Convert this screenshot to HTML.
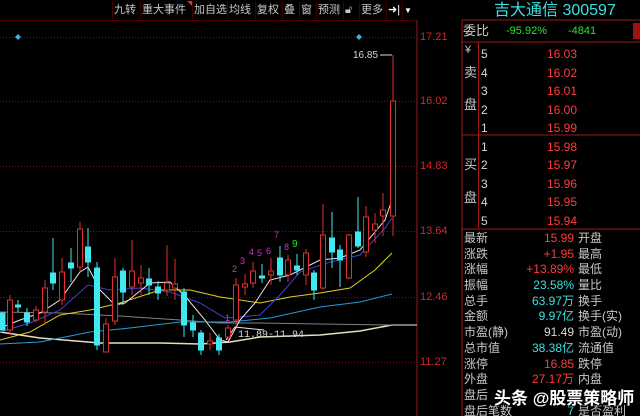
<!DOCTYPE html>
<html style="width:640px;height:416px;overflow:hidden"><head><meta charset="utf-8"><style>
*{margin:0;padding:0;box-sizing:border-box}
body{width:640px;height:416px;background:#000;overflow:hidden;position:relative;font-family:"Liberation Sans","Noto Sans CJK SC",sans-serif;}
.t{position:absolute;white-space:nowrap;line-height:1}
.tb{position:absolute;top:2px;height:17px;font-size:11px;color:#c8c8c8;line-height:17px;border-left:1px solid #400;padding:0 1px;font-family:"Liberation Sans","WenQuanYi Zen Hei",sans-serif}
.ax{color:#d02828;font-size:11px}
.lab{color:#c8c8c8;font-size:12px;font-family:"Liberation Sans","WenQuanYi Zen Hei",sans-serif}
.r{color:#ff3c3c;font-size:12px}
.w{color:#d8d8d8;font-size:12px}
.c{color:#3ce0e0;font-size:12px}
.row{position:relative;height:15.7px}
</style></head><body>
<div style="position:absolute;left:0;top:20px;width:416px;height:1px;background:#500"></div>
<div class="tb" style="left:112px">九转</div>
<div class="tb" style="left:140px">重大事件</div>
<div class="tb" style="left:192px">加自选</div>
<div class="tb" style="left:227px">均线</div>
<div class="tb" style="left:255px">复权</div>
<div class="tb" style="left:282px">叠</div>
<div class="tb" style="left:299px">窗</div>
<div class="tb" style="left:316px">预测</div>
<div class="tb" style="left:343px">🔓︎</div>
<div class="tb" style="left:359px">更多</div>
<div class="tb" style="left:386px;color:#fff">➜|</div>
<div class="tb" style="left:402px;width:12px;color:#fff;font-size:8px">▼</div>
<div style="position:absolute;left:187px;top:1px;width:0;height:0;border-left:5px solid transparent;border-top:5px solid #e03030"></div>

<svg width="640" height="416" style="position:absolute;left:0;top:0">
<line x1="417" y1="20" x2="417" y2="416" stroke="#a01818" stroke-width="1"/>
<line x1="462" y1="20" x2="462" y2="416" stroke="#a01818"/>
<g stroke="#7a1010" stroke-dasharray="1,2">
<line x1="0" y1="37.5" x2="417" y2="37.5"/><line x1="0" y1="101.5" x2="417" y2="101.5"/>
<line x1="0" y1="166.5" x2="417" y2="166.5"/><line x1="0" y1="231.5" x2="417" y2="231.5"/>
<line x1="0" y1="297.5" x2="417" y2="297.5"/><line x1="0" y1="362.5" x2="417" y2="362.5"/>
</g>
<g fill="#3cb0e0"><polygon points="18,34 21,37 18,40 15,37"/><polygon points="359,34 362,37 359,40 356,37"/></g>
<text x="353" y="58" fill="#d8d8d8" font-size="10" font-family="Liberation Sans">16.85</text>
<line x1="380" y1="55" x2="392" y2="55" stroke="#d8d8d8"/>
<polyline fill="none" stroke="#e0e0c0" stroke-width="1.5" points="0,332 40,338 100,343 160,343 200,344 230,342 260,337 320,335 360,331 392,325 417,325"/>
<polyline fill="none" stroke="#808080" stroke-width="1" points="0,312 60,313 120,316 180,320 220,323 260,323 320,324 392,325 417,325"/>
<polyline fill="none" stroke="#2a9ad8" stroke-width="1" points="0,344 40,342 90,332 130,328 180,322 230,322 270,318 320,307 360,302 392,294"/>
<polyline fill="none" stroke="#e0d020" stroke-width="1" points="0,340 30,332 60,315 90,310 120,303 160,290 190,290 220,297 260,303 290,297 320,293 350,288 375,270 392,253"/>
<polyline fill="none" stroke="#4040d0" stroke-width="1" points="0,332 30,323 60,310 88,285 110,290 140,288 170,292 200,303 225,318 240,317 260,315 280,295 300,272 330,262 360,255 385,228 392,218"/>
<polyline fill="none" stroke="#e8e8e8" stroke-width="1" points="0,328 20,320 40,313 60,300 80,272 88,267 100,290 115,305 125,303 150,283 170,282 185,296 205,320 220,340 228,342 240,320 255,303 270,280 290,275 320,260 340,258 360,250 385,220 392,200"/>
<polyline fill="none" stroke="#e8e8e8" stroke-width="1" points="226,340 235,327 264,330"/>
<text x="238" y="337" fill="#d8d8d8" font-size="10" font-family="Liberation Mono">11.89-11.94</text>
<g stroke="#e03030" fill="#000" stroke-width="1">
<line x1="10" y1="295" x2="10" y2="335"/><rect x="7.5" y="300" width="5" height="30"/>
<line x1="36" y1="306" x2="36" y2="322"/><rect x="33.5" y="310" width="5" height="10"/>
<line x1="45" y1="280" x2="45" y2="325"/><rect x="42.5" y="288" width="5" height="24"/>
<line x1="62" y1="258" x2="62" y2="305"/><rect x="59.5" y="272" width="5" height="28"/>
<line x1="80" y1="222" x2="80" y2="272"/><rect x="77.5" y="229" width="5" height="38"/>
<line x1="106" y1="318" x2="106" y2="352"/><rect x="103.5" y="324" width="5" height="28"/>
<line x1="115" y1="258" x2="115" y2="325"/><rect x="112.5" y="277" width="5" height="44"/>
<line x1="132" y1="240" x2="132" y2="295"/><rect x="129.5" y="271" width="5" height="16"/>
<line x1="141" y1="265" x2="141" y2="295"/><rect x="138.5" y="278" width="5" height="5"/>
<line x1="167" y1="245" x2="167" y2="296"/><rect x="164.5" y="283" width="5" height="7"/>
<line x1="175" y1="259" x2="175" y2="300"/><rect x="172.5" y="284" width="5" height="4"/>
<line x1="210" y1="333" x2="210" y2="350"/><rect x="207.5" y="341" width="5" height="3"/>
<line x1="228" y1="325" x2="228" y2="340"/><rect x="225.5" y="328" width="5" height="9"/>
<line x1="236" y1="278" x2="236" y2="325"/><rect x="233.5" y="285" width="5" height="35"/>
<line x1="245" y1="274" x2="245" y2="295"/><rect x="242.5" y="284" width="5" height="3"/>
<line x1="253" y1="262" x2="253" y2="288"/><rect x="250.5" y="271" width="5" height="12"/>
<line x1="271" y1="258" x2="271" y2="285"/><rect x="268.5" y="271" width="5" height="4"/>
<line x1="288" y1="255" x2="288" y2="282"/><rect x="285.5" y="260" width="5" height="15"/>
<line x1="306" y1="249" x2="306" y2="285"/><rect x="303.5" y="253" width="5" height="22"/>
<line x1="323" y1="204" x2="323" y2="290"/><rect x="320.5" y="235" width="5" height="53"/>
<line x1="349" y1="234" x2="349" y2="279"/><rect x="346.5" y="235" width="5" height="43"/>
<line x1="366" y1="206" x2="366" y2="257"/><rect x="363.5" y="217" width="5" height="35"/>
<line x1="375" y1="213" x2="375" y2="243"/><rect x="372.5" y="224" width="5" height="6"/>
<line x1="383" y1="193" x2="383" y2="236"/><rect x="380.5" y="210" width="5" height="6"/>
<line x1="393" y1="55" x2="393" y2="236"/><rect x="390.5" y="101" width="5" height="115"/>
</g>
<g stroke="#40e8f0" fill="#40e8f0" stroke-width="1">
<rect x="0" y="313" width="5" height="17"/>
<line x1="18" y1="300" x2="18" y2="312"/><rect x="15.5" y="305" width="5" height="2"/>
<line x1="27" y1="308" x2="27" y2="326"/><rect x="24.5" y="313" width="5" height="9"/>
<line x1="53" y1="238" x2="53" y2="290"/><rect x="50.5" y="273" width="5" height="10"/>
<line x1="71" y1="248" x2="71" y2="282"/><rect x="68.5" y="263" width="5" height="5"/>
<line x1="88" y1="228" x2="88" y2="277"/><rect x="85.5" y="247" width="5" height="15"/>
<line x1="97" y1="262" x2="97" y2="350"/><rect x="94.5" y="268" width="5" height="77"/>
<line x1="123" y1="268" x2="123" y2="305"/><rect x="120.5" y="271" width="5" height="21"/>
<line x1="149" y1="268" x2="149" y2="295"/><rect x="146.5" y="279" width="5" height="6"/>
<line x1="158" y1="281" x2="158" y2="300"/><rect x="155.5" y="287" width="5" height="6"/>
<line x1="184" y1="288" x2="184" y2="337"/><rect x="181.5" y="292" width="5" height="33"/>
<line x1="193" y1="315" x2="193" y2="337"/><rect x="190.5" y="323" width="5" height="7"/>
<line x1="201" y1="330" x2="201" y2="355"/><rect x="198.5" y="333" width="5" height="17"/>
<line x1="219" y1="334" x2="219" y2="355"/><rect x="216.5" y="338" width="5" height="12"/>
<line x1="262" y1="264" x2="262" y2="283"/><rect x="259.5" y="276" width="5" height="2"/>
<line x1="280" y1="246" x2="280" y2="282"/><rect x="277.5" y="258" width="5" height="17"/>
<line x1="297" y1="254" x2="297" y2="275"/><rect x="294.5" y="266" width="5" height="4"/>
<line x1="314" y1="270" x2="314" y2="300"/><rect x="311.5" y="273" width="5" height="17"/>
<line x1="332" y1="212" x2="332" y2="268"/><rect x="329.5" y="238" width="5" height="14"/>
<line x1="340" y1="245" x2="340" y2="287"/><rect x="337.5" y="250" width="5" height="10"/>
<line x1="358" y1="197" x2="358" y2="248"/><rect x="355.5" y="232" width="5" height="14"/>
</g>
<g font-size="9" font-family="Liberation Sans" fill="#d030d0">
<text x="232" y="272">2</text><text x="240" y="264">3</text><text x="249" y="255">4</text><text x="257" y="256">5</text><text x="266" y="254">6</text><text x="274" y="238">7</text><text x="284" y="250">8</text><text x="225" y="321">1</text>
</g>
<text x="292" y="247" font-size="10" fill="#30e030" font-family="Liberation Sans">9</text>
<g stroke="#a01818">
<line x1="462" y1="20" x2="640" y2="20"/>
<line x1="462" y1="42" x2="640" y2="42"/>
<line x1="462" y1="135" x2="640" y2="135"/>
<line x1="462" y1="229" x2="640" y2="229"/>
<line x1="478.5" y1="42" x2="478.5" y2="229"/>
</g>
<rect x="633" y="23" width="7" height="16" fill="#a01010"/>
</svg>
<div class="t ax" style="left:420px;top:32px">17.21</div>
<div class="t ax" style="left:420px;top:96px">16.02</div>
<div class="t ax" style="left:420px;top:161px">14.83</div>
<div class="t ax" style="left:420px;top:226px">13.64</div>
<div class="t ax" style="left:420px;top:292px">12.46</div>
<div class="t ax" style="left:420px;top:357px">11.27</div>

<div class="t" style="left:494px;top:3px;font-size:16px;color:#3ce0e0">吉大通信 300597</div>
<div class="t lab" style="left:463px;top:24px;font-size:13px">委比</div>
<div class="t" style="left:506px;top:26px;font-size:11px;color:#30e030">-95.92%</div>
<div class="t" style="left:568px;top:26px;font-size:11px;color:#30e030">-4841</div>

<div class="t lab" style="left:465px;top:45px;font-size:11px">¥</div>
<div class="t lab" style="left:464px;top:66px;font-size:13px">卖</div>
<div class="t lab" style="left:464px;top:98px;font-size:13px">盘</div>
<div class="t lab" style="left:464px;top:158px;font-size:13px">买</div>
<div class="t lab" style="left:464px;top:191px;font-size:13px">盘</div>

<div style="position:absolute;left:481px;top:45px;width:96px;font-size:12px;line-height:18.6px">
<div><span class="w">5</span><span class="r" style="float:right">16.03</span></div>
<div><span class="w">4</span><span class="r" style="float:right">16.02</span></div>
<div><span class="w">3</span><span class="r" style="float:right">16.01</span></div>
<div><span class="w">2</span><span class="r" style="float:right">16.00</span></div>
<div><span class="w">1</span><span class="r" style="float:right">15.99</span></div>
</div>
<div style="position:absolute;left:481px;top:138px;width:96px;font-size:12px;line-height:18.4px">
<div><span class="w">1</span><span class="r" style="float:right">15.98</span></div>
<div><span class="w">2</span><span class="r" style="float:right">15.97</span></div>
<div><span class="w">3</span><span class="r" style="float:right">15.96</span></div>
<div><span class="w">4</span><span class="r" style="float:right">15.95</span></div>
<div><span class="w">5</span><span class="r" style="float:right">15.94</span></div>
</div>

<div style="position:absolute;left:464px;top:231px;width:176px;height:185px;overflow:hidden;font-size:12px;line-height:15.7px;font-family:'Liberation Sans','WenQuanYi Zen Hei',sans-serif">
<div class="row"><span class="lab">最新</span><span class="r" style="position:absolute;right:66px">15.99</span><span class="lab" style="position:absolute;left:114px">开盘</span></div>
<div class="row"><span class="lab">涨跌</span><span class="r" style="position:absolute;right:66px">+1.95</span><span class="lab" style="position:absolute;left:114px">最高</span></div>
<div class="row"><span class="lab">涨幅</span><span class="r" style="position:absolute;right:66px">+13.89%</span><span class="lab" style="position:absolute;left:114px">最低</span></div>
<div class="row"><span class="lab">振幅</span><span class="c" style="position:absolute;right:66px">23.58%</span><span class="lab" style="position:absolute;left:114px">量比</span></div>
<div class="row"><span class="lab">总手</span><span class="c" style="position:absolute;right:66px">63.97万</span><span class="lab" style="position:absolute;left:114px">换手</span></div>
<div class="row"><span class="lab">金额</span><span class="c" style="position:absolute;right:66px">9.97亿</span><span class="lab" style="position:absolute;left:114px">换手(实)</span></div>
<div class="row"><span class="lab">市盈(静)</span><span class="w" style="position:absolute;right:66px">91.49</span><span class="lab" style="position:absolute;left:114px">市盈(动)</span></div>
<div class="row"><span class="lab">总市值</span><span class="c" style="position:absolute;right:66px">38.38亿</span><span class="lab" style="position:absolute;left:114px">流通值</span></div>
<div class="row"><span class="lab">涨停</span><span class="r" style="position:absolute;right:66px">16.85</span><span class="lab" style="position:absolute;left:114px">跌停</span></div>
<div class="row"><span class="lab">外盘</span><span class="r" style="position:absolute;right:66px">27.17万</span><span class="lab" style="position:absolute;left:114px">内盘</span></div>
<div class="row"><span class="lab">盘后</span></div>
<div class="row"><span class="lab">盘后笔数</span><span class="c" style="position:absolute;right:66px">7</span><span class="lab" style="position:absolute;left:114px">是否盈利</span></div>
</div>
<div class="t" style="left:494px;top:390px;font-size:17px;color:#fff;font-weight:bold;text-shadow:0 0 2px #000,1px 1px 1px #000">头条 @股票策略师</div>
</body></html>
